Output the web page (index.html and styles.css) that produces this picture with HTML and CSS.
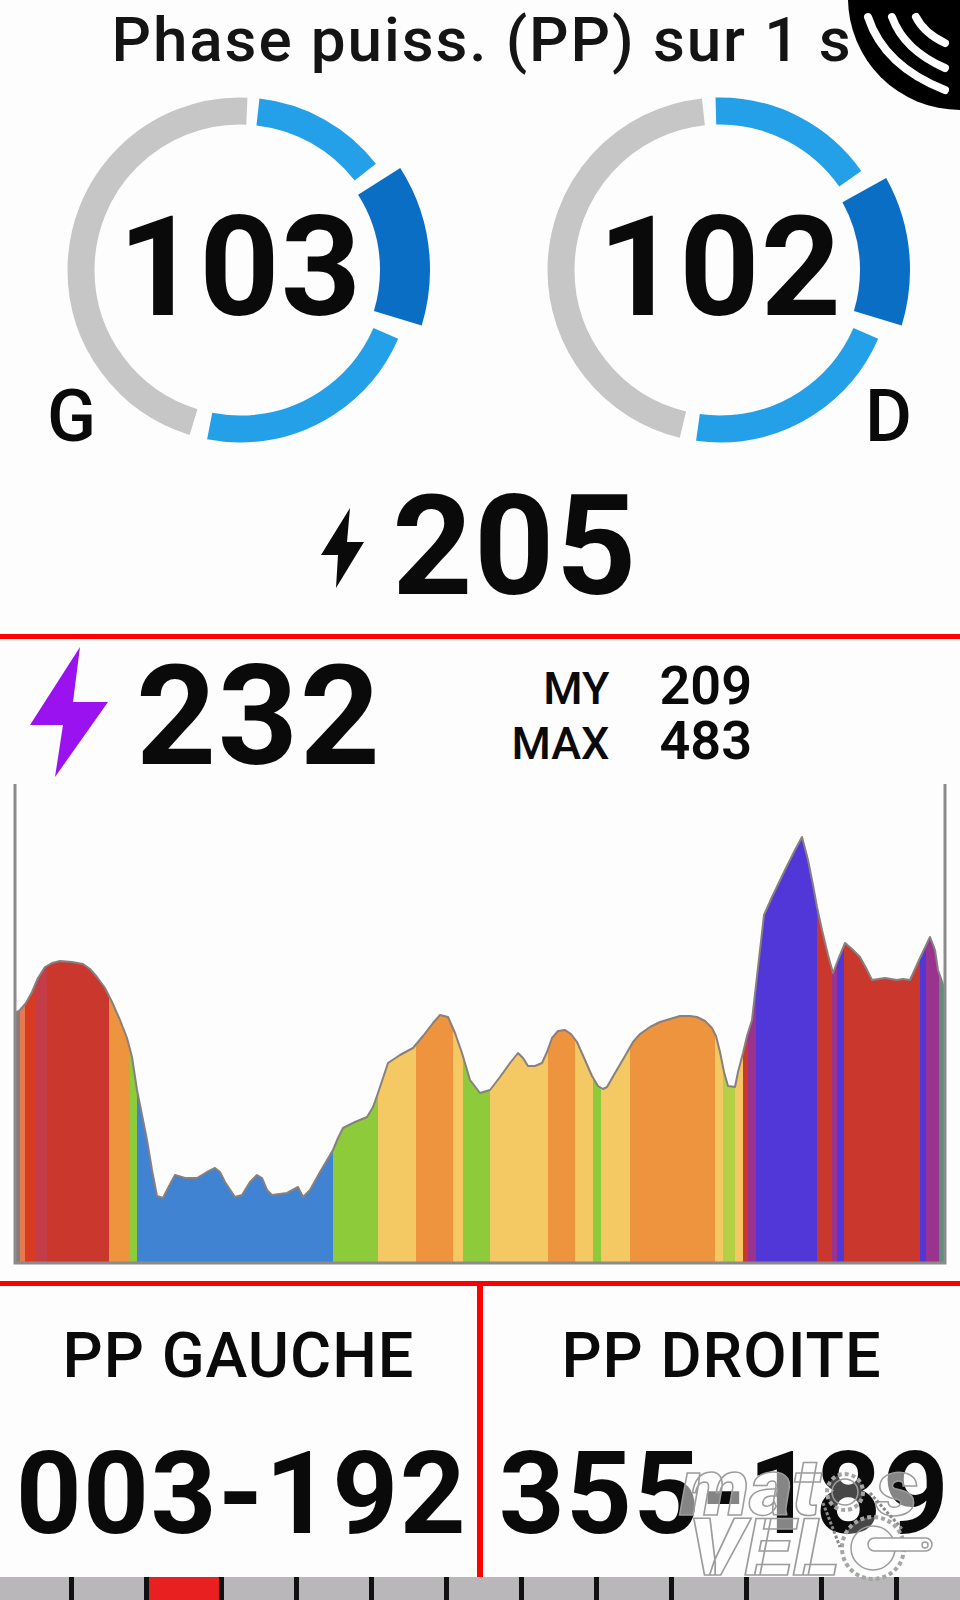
FILE: index.html
```html
<!DOCTYPE html>
<html lang="fr">
<head>
<meta charset="utf-8">
<title>Phase puissance</title>
<link rel="stylesheet" href="styles.css">
</head>
<body>
<main class="page">
  <svg class="wifi" viewBox="840 0 120 120" aria-hidden="true">
    <circle class="wifi-bg" cx="960" cy="-2" r="112"/>
    <path class="wifi-arc" d="M868 17Q884 66 945 90"/>
    <path class="wifi-arc" d="M892 17Q904 50 945 68"/>
    <path class="wifi-arc" d="M916 17Q924 33 945 43"/>
  </svg>

  <section class="top">
    <h1 class="title">Phase puiss. (PP) sur 1 s</h1>
    <div class="rings">
      <div class="ring">
        <svg class="ring-svg" viewBox="0 0 480 374" aria-hidden="true">
          <g transform="rotate(-90 240 190)">
            <circle class="arc arc-gray" cx="240" cy="190" r="159" pathLength="360" stroke-dasharray="165.5 194.5" stroke-dashoffset="-197"/>
            <circle class="arc arc-blue" cx="240" cy="190" r="159" pathLength="360" stroke-dasharray="45.5 314.5" stroke-dashoffset="-6.5"/>
            <circle class="arc arc-dark" cx="240" cy="190" r="165" pathLength="360" stroke-dasharray="49.5 310.5" stroke-dashoffset="-57.5"/>
            <circle class="arc arc-blue" cx="240" cy="190" r="159" pathLength="360" stroke-dasharray="77.5 282.5" stroke-dashoffset="-113.5"/>
          </g>
        </svg>
        <span class="ring-value">103</span>
        <span class="side side-g">G</span>
      </div>
      <div class="ring">
        <svg class="ring-svg" viewBox="0 0 480 374" aria-hidden="true">
          <g transform="rotate(-90 240 190)">
            <circle class="arc arc-gray" cx="240" cy="190" r="159" pathLength="360" stroke-dasharray="160.5 199.5" stroke-dashoffset="-193.5"/>
            <circle class="arc arc-blue" cx="240" cy="190" r="159" pathLength="360" stroke-dasharray="56.5 303.5" stroke-dashoffset="1.5"/>
            <circle class="arc arc-dark" cx="240" cy="190" r="165" pathLength="360" stroke-dasharray="46 314" stroke-dashoffset="-61"/>
            <circle class="arc arc-blue" cx="240" cy="190" r="159" pathLength="360" stroke-dasharray="74.5 285.5" stroke-dashoffset="-113.5"/>
          </g>
        </svg>
        <span class="ring-value">102</span>
        <span class="side side-d">D</span>
      </div>
    </div>
    <div class="total">
      <svg class="bolt-small" viewBox="320 507 44 82" aria-hidden="true">
        <polygon class="ink" points="349,508 320,555 337,555 335,588 363,542 346,542"/>
      </svg>
      <span class="big big-total">205</span>
    </div>
  </section>

  <section class="middle">
    <div class="head">
      <svg class="bolt" viewBox="30 647 78 130" aria-hidden="true">
        <polygon class="purple" points="80,647 30,725 63,725 55,777 108,702 73,702"/>
      </svg>
      <span class="big big-power">232</span>
      <dl class="stats">
        <dt class="stat-label">MY</dt><dd class="stat-value">209</dd>
        <dt class="stat-label">MAX</dt><dd class="stat-value">483</dd>
      </dl>
    </div>
    <svg class="chart" viewBox="0 784 960 482" aria-hidden="true">
      <defs>
        <polygon id="shape" points="15,1013 20,1010 26,1003 32,992 38,978 45,967 52,963 60,961 72,962 83,964 90,969 97,977 105,988 112,1002 120,1020 127,1038 132,1057 137,1090 142,1115 147,1140 152,1170 157,1196 163,1198 168,1188 175,1175 185,1178 197,1178 207,1172 215,1168 220,1172 225,1182 235,1197 242,1195 250,1182 257,1175 262,1178 267,1190 272,1195 287,1193 298,1187 303,1197 310,1190 320,1172 333,1150 338,1138 343,1128 355,1122 367,1117 373,1107 378,1093 383,1078 388,1063 400,1055 413,1048 423,1036 433,1023 440,1015 448,1017 455,1033 462,1053 470,1080 480,1093 490,1090 500,1077 510,1063 518,1053 523,1058 528,1066 535,1066 542,1063 547,1052 552,1038 558,1031 565,1030 571,1034 577,1042 585,1060 592,1076 598,1086 603,1089 607,1087 615,1073 625,1056 633,1042 640,1034 650,1027 660,1022 670,1019 680,1016 690,1016 697,1017 705,1021 712,1028 716,1036 720,1052 724,1072 728,1086 735,1087 738,1072 743,1053 747,1036 752,1020 756,985 760,950 764,915 772,897 785,870 795,850 802,837 808,860 813,885 817,907 822,930 828,955 833,973 838,960 845,943 852,949 860,957 866,968 872,980 885,978 897,980 903,979 910,980 920,958 930,937 935,950 938,970 945,990 945,1263 15,1263"/>
        <clipPath id="profile"><use href="#shape"/></clipPath>
      </defs>
      <g clip-path="url(#profile)">
        <rect class="z-mauve" x="15" y="784" width="5" height="480"/>
        <rect class="z-salmon" x="20" y="784" width="5" height="480"/>
        <rect class="z-scarlet" x="25" y="784" width="10" height="480"/>
        <rect class="z-rose" x="35" y="784" width="12" height="480"/>
        <rect class="z-red" x="47" y="784" width="62" height="480"/>
        <rect class="z-orange" x="109" y="784" width="21" height="480"/>
        <rect class="z-green" x="130" y="784" width="7" height="480"/>
        <rect class="z-blue" x="137" y="784" width="196" height="480"/>
        <rect class="z-green" x="333" y="784" width="45" height="480"/>
        <rect class="z-yellow" x="378" y="784" width="38" height="480"/>
        <rect class="z-orange" x="416" y="784" width="37" height="480"/>
        <rect class="z-yellow" x="453" y="784" width="10" height="480"/>
        <rect class="z-green" x="463" y="784" width="27" height="480"/>
        <rect class="z-yellow" x="490" y="784" width="58" height="480"/>
        <rect class="z-orange" x="548" y="784" width="27" height="480"/>
        <rect class="z-yellow" x="575" y="784" width="18" height="480"/>
        <rect class="z-green" x="593" y="784" width="8" height="480"/>
        <rect class="z-yellow" x="601" y="784" width="29" height="480"/>
        <rect class="z-orange" x="630" y="784" width="85" height="480"/>
        <rect class="z-yellow" x="715" y="784" width="8" height="480"/>
        <rect class="z-lime" x="723" y="784" width="12" height="480"/>
        <rect class="z-yellow" x="735" y="784" width="8" height="480"/>
        <rect class="z-red" x="743" y="784" width="5" height="480"/>
        <rect class="z-purple" x="748" y="784" width="8" height="480"/>
        <rect class="z-indigo" x="756" y="784" width="61" height="480"/>
        <rect class="z-red" x="817" y="784" width="15" height="480"/>
        <rect class="z-purple" x="832" y="784" width="5" height="480"/>
        <rect class="z-indigo" x="837" y="784" width="7" height="480"/>
        <rect class="z-red" x="844" y="784" width="76" height="480"/>
        <rect class="z-indigo" x="920" y="784" width="6" height="480"/>
        <rect class="z-purple" x="926" y="784" width="13" height="480"/>
        <rect class="z-teal" x="939" y="784" width="6" height="480"/>
      </g>
      <use class="profile-line" href="#shape"/>
      <path class="axis" d="M15 784V1263H945V784"/>
    </svg>
  </section>

  <section class="bottom">
    <div class="cell cell-left">
      <div class="cell-label">PP GAUCHE</div>
      <div class="cell-value">003-192</div>
    </div>
    <div class="cell">
      <div class="cell-label">PP DROITE</div>
      <div class="cell-value">355-189</div>
    </div>
  </section>

  <div class="zones">
    <span class="zone zone-first"></span><span class="zone"></span><span class="zone zone-on"></span><span class="zone"></span><span class="zone"></span><span class="zone"></span><span class="zone"></span><span class="zone"></span><span class="zone"></span><span class="zone"></span><span class="zone"></span><span class="zone"></span><span class="zone zone-last"></span>
  </div>

  <svg class="logo" viewBox="660 1430 300 170" aria-label="matos vélo">
    <text class="logo-text" x="680" y="1515" textLength="140" lengthAdjust="spacingAndGlyphs">mat</text>
    <text class="logo-text" x="876" y="1515" textLength="42" lengthAdjust="spacingAndGlyphs">s</text>
    <text class="logo-text" x="688" y="1575" textLength="152" lengthAdjust="spacingAndGlyphs">VEL</text>
    <circle class="logo-teeth" cx="845" cy="1492" r="18"/>
    <circle class="logo-line" cx="845" cy="1492" r="13"/>
    <circle class="logo-teeth" cx="873" cy="1548" r="31"/>
    <circle class="logo-line" cx="873" cy="1548" r="22"/>
    <path class="logo-chain" d="M823 1503L840 1547M870 1493L903 1530"/>
    <rect class="logo-crank" x="868" y="1538" width="64" height="13" rx="6.5"/>
    <circle class="logo-line" cx="925" cy="1545" r="3"/>
  </svg>
</main>
</body>
</html>
```
FILE: styles.css
```css
* { box-sizing: border-box; }
html, body { margin: 0; padding: 0; background: #fefdfe; }
body { font-family: Roboto, "Liberation Sans", sans-serif; color: #0a0a0a; }

.page { position: relative; width: 960px; height: 1600px; overflow: hidden; }

.wifi { position: absolute; top: 0; right: 0; width: 120px; height: 120px; }
.wifi-bg { fill: #000; }
.wifi-arc { fill: none; stroke: #fff; stroke-width: 8; stroke-linecap: round; }

.top { height: 639px; border-bottom: 5px solid #f00; }
.title { margin: 0; height: 80px; padding-left: 4px; font-size: 62px; line-height: 80px; font-weight: 500; text-align: center; letter-spacing: 1.9px; color: #141414; }

.rings { display: grid; grid-template-columns: 480px 480px; height: 374px; }
.ring { position: relative; display: grid; place-items: center; }
.ring > * { grid-area: 1 / 1; }
.ring-svg { width: 480px; height: 374px; display: block; }
.arc { fill: none; stroke-width: 27; }
.arc-gray { stroke: #c6c6c6; }
.arc-blue { stroke: #24a0e8; }
.arc-dark { stroke: #0a6fc4; stroke-width: 50; }
.ring-value { font-size: 140px; line-height: 1; font-weight: 700; letter-spacing: 1px; }
.side { position: absolute; top: 301px; font-size: 72px; line-height: 1; font-weight: 500; }
.side-g { left: 47px; }
.side-d { left: 385px; }

.total { display: flex; align-items: center; justify-content: center; gap: 27px; height: 180px; padding-right: 1px; padding-top: 4px; }
.bolt-small { width: 44px; height: 82px; display: block; margin-top: 4px; }
.ink { fill: #0a0a0a; }
.big { font-size: 140px; line-height: 1; font-weight: 700; }
.big-total { letter-spacing: 1.5px; }

.middle { height: 647px; border-bottom: 5px solid #f00; }
.head { display: flex; align-items: flex-start; height: 145px; padding-left: 30px; }
.bolt { width: 78px; height: 130px; display: block; margin-top: 8px; flex: none; }
.purple { fill: #9a12f0; }
.big-power { margin: 42px 0 0 28px; line-height: 70px; letter-spacing: 1.5px; }
.stats { display: grid; grid-template-columns: 100px 90px; column-gap: 50px; align-items: baseline; margin: 21px 0 0 128px; }
.stat-label { font-size: 45px; line-height: 52px; font-weight: 500; text-align: right; }
.stat-value { margin: 0; font-size: 54px; line-height: 52px; font-weight: 600; }

.chart { width: 960px; height: 482px; display: block; }
.axis { fill: none; stroke: #8d8a8e; stroke-width: 3; }
.profile-line { fill: none; stroke: #87807e; stroke-width: 2; stroke-linejoin: round; }
.z-mauve { fill: #8a7a78; }
.z-salmon { fill: #e5794f; }
.z-scarlet { fill: #d83a22; }
.z-rose { fill: #c43c48; }
.z-red { fill: #ca372d; }
.z-orange { fill: #ee933e; }
.z-green { fill: #8ecb3a; }
.z-blue { fill: #4083d2; }
.z-yellow { fill: #f4c862; }
.z-lime { fill: #b6d046; }
.z-purple { fill: #9a3290; }
.z-indigo { fill: #5136d8; }
.z-teal { fill: #5f8f78; }

.bottom { display: grid; grid-template-columns: 483px 477px; height: 291px; }
.cell { text-align: center; padding-top: 35px; }
.cell-left { border-right: 6px solid #f00; }
.cell-label { font-size: 63px; line-height: 70px; font-weight: 500; letter-spacing: 1px; }
.cell-value { margin-top: 45px; padding-left: 6px; font-size: 115px; line-height: 115px; font-weight: 700; letter-spacing: 1.5px; }

.zones { display: flex; height: 23px; background: #b9b7b9; }
.zone { flex: none; width: 75px; border-right: 5px solid #111; }
.zone-first { width: 74px; }
.zone-on { background: #e8201f; }
.zone-last { border-right: 0; width: 65px; }

.logo { position: absolute; left: 660px; top: 1430px; width: 300px; height: 170px; }
.logo-text { font-family: Roboto, sans-serif; font-style: italic; font-weight: 900; font-size: 80px; fill: rgba(255, 255, 255, 0.5); stroke: #9c9c9c; stroke-width: 1.5; }
.logo-teeth { fill: rgba(255, 255, 255, 0.25); stroke: #a5a5a5; stroke-width: 4; stroke-dasharray: 4 3; }
.logo-line { fill: none; stroke: #9c9c9c; stroke-width: 1.5; }
.logo-chain { fill: none; stroke: #8a8a8a; stroke-width: 3; stroke-dasharray: 3 2; }
.logo-crank { fill: #fff; stroke: #9c9c9c; stroke-width: 1.5; }
```
